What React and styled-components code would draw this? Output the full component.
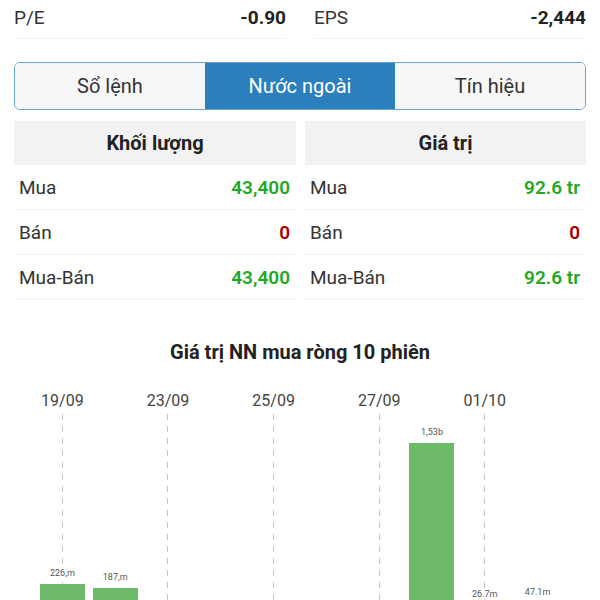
import styled, { createGlobalStyle } from 'styled-components'

const GlobalStyle = createGlobalStyle`
body {
  margin: 0;
  background: #fff;
  font-family: Roboto, "Noto Sans", "Liberation Sans", sans-serif;
  color: #222;
}
`

const Page = styled.div`
width: 600px;
height: 600px;
overflow: hidden;
padding: 0 14px;
box-sizing: border-box;
`

const StatRow = styled.div`
display: grid;
grid-template-columns: 272px 272px;
column-gap: 28px;
`

const StatCell = styled.div`
height: 39px;
padding-bottom: 4px;
box-sizing: border-box;
border-bottom: 1px solid #efefef;
display: flex;
align-items: center;
justify-content: space-between;
font-size: 19px;
`

const StatLabel = styled.span`
color: #333;
`

const StatValue = styled.span`
font-weight: 700;
color: #222;
`

const Tabs = styled.div`
margin-top: 23px;
height: 48px;
display: flex;
border: 1.5px solid #6aa6cf;
border-radius: 6px;
overflow: hidden;
box-sizing: border-box;
`

const Tab = styled.div`
flex: 1;
display: flex;
align-items: center;
justify-content: center;
font-size: 20px;
background: ${p => (p.$active ? '#2b7fbc' : '#f7f7f7')};
color: ${p => (p.$active ? '#fff' : '#333')};
`

const Tables = styled.div`
margin-top: 11px;
display: grid;
grid-template-columns: 282px 281px;
column-gap: 9px;
`

const Column = styled.div`
display: flex;
flex-direction: column;
`

const Header = styled.div`
height: 44px;
background: #f2f2f2;
display: flex;
align-items: center;
justify-content: center;
font-size: 20px;
font-weight: 700;
color: #222;
`

const Row = styled.div`
height: 45px;
box-sizing: border-box;
padding: 0 6px 0 5px;
border-bottom: 1px solid #efefef;
display: flex;
align-items: center;
justify-content: space-between;
font-size: 19px;
color: #333;
`

const Amount = styled.span`
font-weight: 600;
color: ${p => (p.$tone === 'down' ? '#a80000' : '#22a922')};
`

const ChartTitle = styled.div`
margin-top: 40px;
line-height: 24px;
text-align: center;
font-size: 20px;
font-weight: 700;
color: #222;
`

const Chart = styled.div`
margin: 27px 0 0 22px;
display: grid;
grid-template-columns: repeat(10, 52.8px);
`

const Slot = styled.div`
display: flex;
flex-direction: column;
align-items: center;
`

const DateLabel = styled.div`
height: 20px;
line-height: 20px;
font-size: 16px;
color: #444;
white-space: nowrap;
`

const Plot = styled.div`
margin-top: 3px;
height: 194px;
width: 100%;
display: flex;
flex-direction: column;
justify-content: flex-end;
align-items: center;
background-image: ${p =>
  p.$grid ? 'linear-gradient(to bottom, #c4c4c4 50%, transparent 50%)' : 'none'};
background-size: 1px 12px;
background-repeat: repeat-y;
background-position: center top;
`

const BarLabel = styled.div`
font-size: 9px;
line-height: 10px;
color: #555;
margin-bottom: 6px;
white-space: nowrap;
background: #fff;
`

const Bar = styled.div`
width: 45px;
background: #6dbb69;
`

const stats = [
  { label: 'P/E', value: '-0.90' },
  { label: 'EPS', value: '-2,444' },
]

const tables = [
  {
    title: 'Khối lượng',
    rows: [
      { label: 'Mua', value: '43,400' },
      { label: 'Bán', value: '0', tone: 'down' },
      { label: 'Mua-Bán', value: '43,400' },
    ],
  },
  {
    title: 'Giá trị',
    rows: [
      { label: 'Mua', value: '92.6 tr' },
      { label: 'Bán', value: '0', tone: 'down' },
      { label: 'Mua-Bán', value: '92.6 tr' },
    ],
  },
]

const sessions = [
  { date: '19/09', value: 226, label: '226,m' },
  { value: 187, label: '187,m' },
  { date: '23/09' },
  {},
  { date: '25/09' },
  {},
  { date: '27/09' },
  { value: 1530, label: '1,53b' },
  { date: '01/10', value: 26.7, label: '26.7m' },
  { value: 47.1, label: '47.1m' },
]

const PX_PER_M = 165.5 / 1530

const App = () => {
  return (
    <>
      <GlobalStyle />
      <Page>
        <StatRow>
          {stats.map(s => (
            <StatCell key={s.label}>
              <StatLabel>{s.label}</StatLabel>
              <StatValue>{s.value}</StatValue>
            </StatCell>
          ))}
        </StatRow>

        <Tabs>
          <Tab>Sổ lệnh</Tab>
          <Tab $active>Nước ngoài</Tab>
          <Tab>Tín hiệu</Tab>
        </Tabs>

        <Tables>
          {tables.map(t => (
            <Column key={t.title}>
              <Header>{t.title}</Header>
              {t.rows.map(r => (
                <Row key={r.label}>
                  <span>{r.label}</span>
                  <Amount $tone={r.tone}>{r.value}</Amount>
                </Row>
              ))}
            </Column>
          ))}
        </Tables>

        <ChartTitle>Giá trị NN mua ròng 10 phiên</ChartTitle>
        <Chart>
          {sessions.map((s, i) => (
            <Slot key={i}>
              <DateLabel>{s.date || ''}</DateLabel>
              <Plot $grid={!!s.date}>
                {s.label && <BarLabel>{s.label}</BarLabel>}
                {s.value && <Bar style={{ height: s.value * PX_PER_M }} />}
              </Plot>
            </Slot>
          ))}
        </Chart>
      </Page>
    </>
  )
}

export default App
